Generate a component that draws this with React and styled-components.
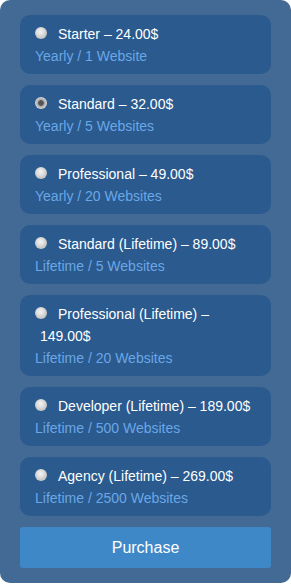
import React, { useState } from "react";
import styled, { createGlobalStyle } from "styled-components";

const Global = createGlobalStyle`
  html, body { margin: 0; padding: 0; background: #ffffff; }
  body { font-family: "Liberation Sans", Arial, sans-serif; }
`;

const Panel = styled.div`
  width: 291px;
  box-sizing: border-box;
  background: #436a95;
  border-radius: 10px;
  padding: 15px 20px 15px;
  display: flex;
  flex-direction: column;
  gap: 11px;
`;

const Card = styled.label`
  display: block;
  background: #2a5a8e;
  border-radius: 10px;
  padding: 8px 15px 7px;
  cursor: pointer;
`;

const Title = styled.div`
  padding-left: 5px;
  font-size: 14px;
  line-height: 22px;
  color: #ffffff;
`;

const Radio = styled.span`
  display: inline-block;
  width: 12px;
  height: 12px;
  margin-left: -5px;
  margin-right: 11px;
  border-radius: 50%;
  vertical-align: 0;
  box-sizing: border-box;
  background: ${(p) =>
    p.$checked
      ? "radial-gradient(circle at 50% 50%, #505050 0, #5a5a5a 2.5px, #a9a9a9 3.2px, #d6d6d6 6px)"
      : "radial-gradient(circle at 45% 40%, #f2f2f2 0, #e2e2e2 3px, #c8c8c8 6px)"};
`;

const Sub = styled.div`
  font-size: 14px;
  line-height: 22px;
  color: #6aa7e6;
`;

const Button = styled.button`
  height: 41px;
  border: none;
  border-radius: 3px;
  background: #3f88c8;
  color: #ffffff;
  font-family: "Liberation Sans", Arial, sans-serif;
  font-size: 16px;
  cursor: pointer;
  padding: 0;
`;

const plans = [
  { t: "Starter – 24.00$", s: "Yearly / 1 Website" },
  { t: "Standard – 32.00$", s: "Yearly / 5 Websites" },
  { t: "Professional – 49.00$", s: "Yearly / 20 Websites" },
  { t: "Standard (Lifetime) – 89.00$", s: "Lifetime / 5 Websites" },
  { t: "Professional (Lifetime) – 149.00$", s: "Lifetime / 20 Websites" },
  { t: "Developer (Lifetime) – 189.00$", s: "Lifetime / 500 Websites" },
  { t: "Agency (Lifetime) – 269.00$", s: "Lifetime / 2500 Websites" },
];

export default function App() {
  const [sel, setSel] = useState(1);
  return (
    <>
      <Global />
      <Panel>
        {plans.map((p, i) => (
          <Card key={i} onClick={() => setSel(i)}>
            <Title>
              <Radio $checked={sel === i} />
              {p.t}
            </Title>
            <Sub>{p.s}</Sub>
          </Card>
        ))}
        <Button>Purchase</Button>
      </Panel>
    </>
  );
}
